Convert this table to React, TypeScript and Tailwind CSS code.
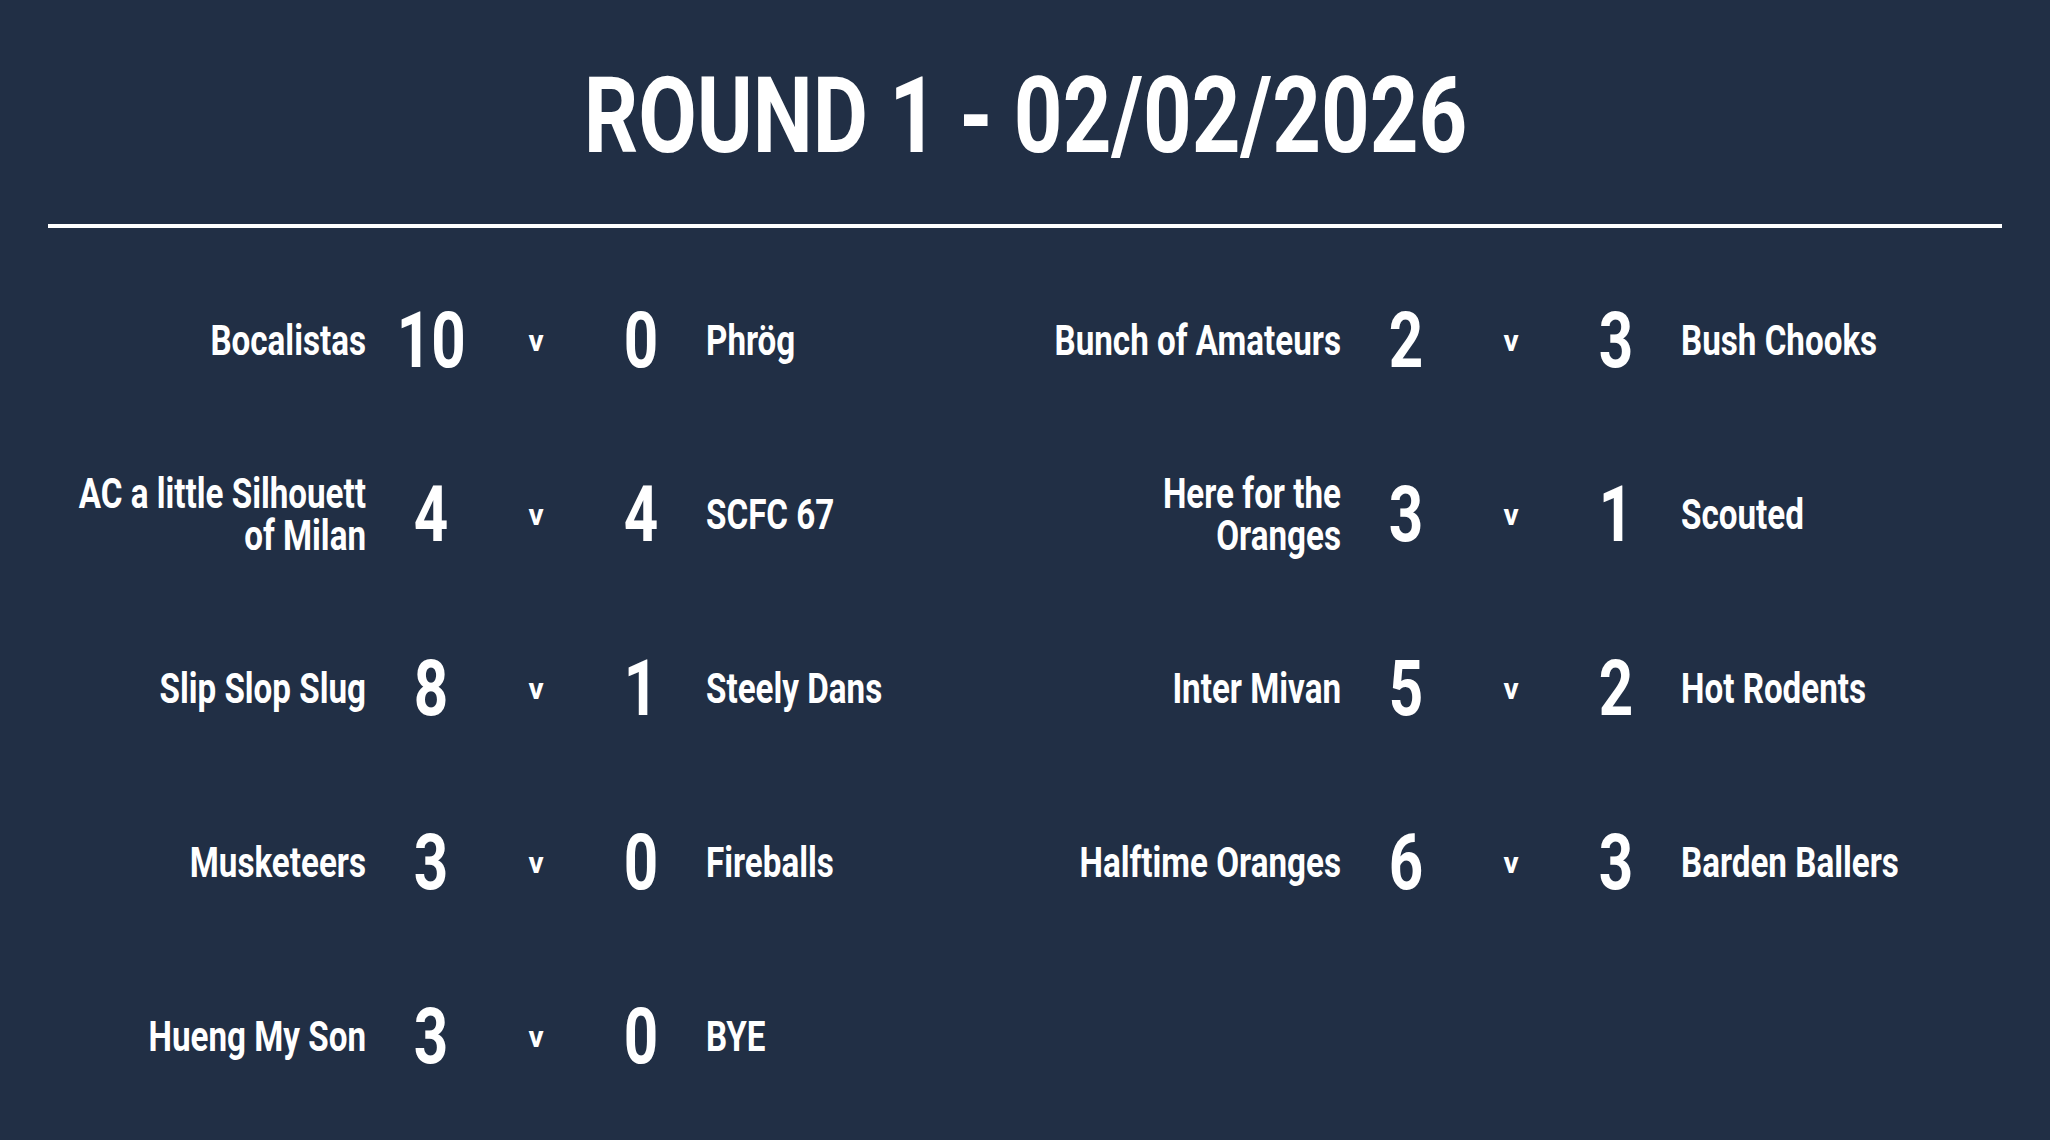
import React from "react";

type Fixture = {
  home: string;
  homeScore: number;
  away: string;
  awayScore: number;
};

// names break where they break on the board
const fixtures: Fixture[] = [
  { home: "Bocalistas", homeScore: 10, away: "Phrög", awayScore: 0 },
  { home: "Bunch of Amateurs", homeScore: 2, away: "Bush Chooks", awayScore: 3 },
  { home: "AC a little Silhouett\nof Milan", homeScore: 4, away: "SCFC 67", awayScore: 4 },
  { home: "Here for the\nOranges", homeScore: 3, away: "Scouted", awayScore: 1 },
  { home: "Slip Slop Slug", homeScore: 8, away: "Steely Dans", awayScore: 1 },
  { home: "Inter Mivan", homeScore: 5, away: "Hot Rodents", awayScore: 2 },
  { home: "Musketeers", homeScore: 3, away: "Fireballs", awayScore: 0 },
  { home: "Halftime Oranges", homeScore: 6, away: "Barden Ballers", awayScore: 3 },
  { home: "Hueng My Son", homeScore: 3, away: "BYE", awayScore: 0 },
];

// no condensed DIN here, so Roboto squeezed sideways stands in for it
function FixtureRow({ f }: { f: Fixture }) {
  return (
    <div className="flex h-[174px] items-center">
      <div className="flex w-[300px] justify-end">
        <div className="w-[375px] shrink-0 origin-right scale-x-[0.79] whitespace-pre-line text-right text-[42px] font-bold leading-[42px]">
          {f.home}
        </div>
      </div>
      <div className="ml-[15px] w-[100px] text-center">
        <span className="inline-block scale-x-[0.78] text-[77px] font-bold leading-none">{f.homeScore}</span>
      </div>
      <div className="w-[110px] text-center text-[30px] font-bold leading-none">v</div>
      <div className="w-[100px] text-center">
        <span className="inline-block scale-x-[0.78] text-[77px] font-bold leading-none">{f.awayScore}</span>
      </div>
      <div className="ml-[15px] flex-1">
        <div className="origin-left scale-x-[0.79] whitespace-nowrap text-[42px] font-bold leading-[42px]">{f.away}</div>
      </div>
    </div>
  );
}

export default function App() {
  return (
    <div className="h-[1140px] w-[2050px] overflow-hidden bg-[#212f45] font-['Roboto',sans-serif] text-white">
      <div className="px-12 pt-[64px]">
        <h1 className="text-center text-[105px] font-bold leading-none">
          <span className="inline-block scale-x-[0.81]">ROUND 1 - 02/02/2026</span>
        </h1>
        <div className="mt-[55px] h-[4px] bg-white" />
      </div>
      <div className="mt-[26px] grid grid-cols-[975px_975px] pl-[66px]">
        {fixtures.map((f) => (
          <FixtureRow key={f.home} f={f} />
        ))}
      </div>
    </div>
  );
}
